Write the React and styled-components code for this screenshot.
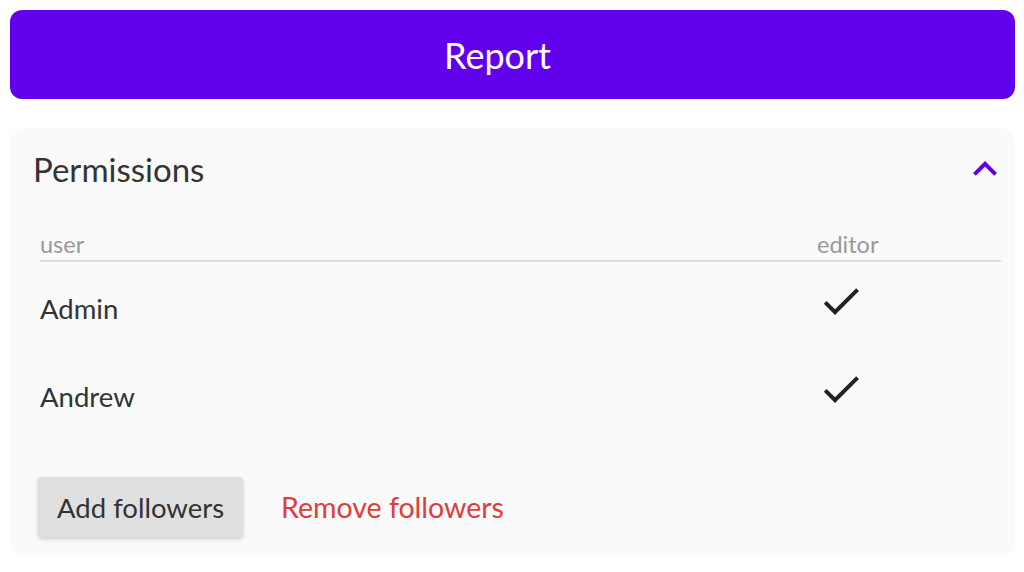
import React from "react";
import styled, { createGlobalStyle } from "styled-components";

const Global = createGlobalStyle`
  html, body { margin: 0; padding: 0; background: #ffffff; }
  body { font-family: "Lato", "Open Sans", sans-serif; }
  * { box-sizing: border-box; }
`;

const Page = styled.div`
  padding: 10px 9px 10px 10px;
  display: flex;
  flex-direction: column;
  gap: 29px;
`;

const PrimaryButton = styled.button`
  height: 89px;
  width: 100%;
  border: none;
  border-radius: 12px;
  background: #6200ee;
  color: #ffffff;
  font-family: "Lato", sans-serif;
  font-size: 36px;
  padding: 0 30px 0 0;
  cursor: pointer;
`;

const Card = styled.section`
  background: #fafafa;
  border-radius: 16px;
  padding: 0 6px 19px 23px;
  display: flex;
  flex-direction: column;
`;

const CardHeader = styled.div`
  height: 82px;
  display: flex;
  align-items: center;
  justify-content: space-between;
`;

const Title = styled.h2`
  margin: 0;
  font-weight: 400;
  font-size: 33px;
  color: #333333;
`;

const IconButton = styled.button`
  border: none;
  background: transparent;
  padding: 0;
  width: 48px;
  height: 48px;
  display: flex;
  cursor: pointer;
`;

const Table = styled.div`
  margin: 20px 8px 0 7px;
  display: grid;
  grid-template-columns: 777px 1fr;
`;

const HeadCell = styled.div`
  font-size: 23.5px;
  color: #999999;
  line-height: 1.2;
  padding-bottom: 2px;
  border-bottom: 2px solid #dddddd;
`;

const Cell = styled.div`
  height: 88px;
  padding-top: ${(p) => (p.$icon ? "15px" : "30px")};
  font-size: 27.5px;
  line-height: 1.2;
  color: #333333;
`;

const Actions = styled.div`
  margin: 39px 0 0 5px;
  display: flex;
  align-items: center;
  gap: 38px;
`;

const FlatButton = styled.button`
  height: 60px;
  padding: 0 19px;
  border: none;
  border-radius: 4px;
  background: #e0e0e0;
  box-shadow: 0 2px 4px rgba(0, 0, 0, 0.18);
  font-family: "Lato", sans-serif;
  font-size: 27.5px;
  color: #333333;
  cursor: pointer;
`;

const TextButton = styled.button`
  border: none;
  background: transparent;
  padding: 0;
  font-family: "Lato", sans-serif;
  font-size: 28.5px;
  color: #e03c3c;
  cursor: pointer;
`;

const ExpandLess = () => (
  <svg width="48" height="48" viewBox="0 0 24 24" fill="#6200ee">
    <path d="M12 8l-6 6 1.41 1.41L12 10.83l4.59 4.58L18 14z" />
  </svg>
);

const Check = () => (
  <svg width="48" height="48" viewBox="0 0 24 24" fill="#222222">
    <path d="M9 16.17L4.83 12l-1.42 1.41L9 19 21 7l-1.41-1.41z" />
  </svg>
);

const users = [
  { name: "Admin", editor: true },
  { name: "Andrew", editor: true },
];

export default function App() {
  return (
    <>
      <Global />
      <Page>
        <PrimaryButton>Report</PrimaryButton>
        <Card>
          <CardHeader>
            <Title>Permissions</Title>
            <IconButton aria-label="collapse">
              <ExpandLess />
            </IconButton>
          </CardHeader>
          <Table>
            <HeadCell>user</HeadCell>
            <HeadCell>editor</HeadCell>
            {users.map((u) => (
              <React.Fragment key={u.name}>
                <Cell>{u.name}</Cell>
                <Cell $icon>{u.editor && <Check />}</Cell>
              </React.Fragment>
            ))}
          </Table>
          <Actions>
            <FlatButton>Add followers</FlatButton>
            <TextButton>Remove followers</TextButton>
          </Actions>
        </Card>
      </Page>
    </>
  );
}
